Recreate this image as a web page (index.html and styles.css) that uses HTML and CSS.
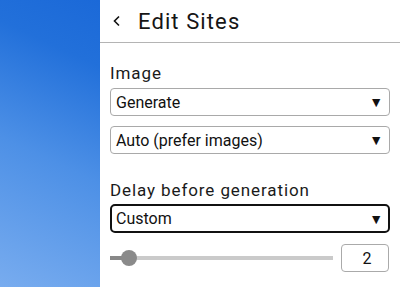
FILE: index.html
```html
<!DOCTYPE html>
<html>
<head>
<meta charset="utf-8">
<link rel="stylesheet" href="styles.css">
</head>
<body>
<div class="app">
  <div class="backdrop"></div>
  <div class="panel">
    <div class="header">
      <svg class="back" width="10" height="14" viewBox="0 0 10 14"><polyline points="7,2.5 2.5,7 7,11.5" fill="none" stroke="#111" stroke-width="1.6"/></svg>
      <span class="title">Edit Sites</span>
    </div>
    <div class="content">
      <div class="label label-first">Image</div>
      <div class="select"><span>Generate</span><span class="arrow">▼</span></div>
      <div class="select"><span>Auto (prefer images)</span><span class="arrow">▼</span></div>
      <div class="label label-second">Delay before generation</div>
      <div class="select focused"><span>Custom</span><span class="arrow">▼</span></div>
      <div class="slider-row">
        <div class="slider">
          <div class="track-fill"></div>
          <div class="thumb"></div>
        </div>
        <div class="number">2</div>
      </div>
    </div>
  </div>
</div>
</body>
</html>
```
FILE: styles.css
```css
html, body {
  margin: 0;
  padding: 0;
  width: 400px;
  height: 287px;
  overflow: hidden;
  font-family: Roboto, "Liberation Sans", sans-serif;
  color: #111;
}
.app {
  display: flex;
  width: 400px;
  height: 287px;
}
.backdrop {
  width: 100px;
  flex: none;
  background: linear-gradient(25deg, #78acef 0%, #4d90e6 45%, #2270da 80%, #1b69d8 100%);
}
.panel {
  flex: 1;
  background: #fff;
  display: flex;
  flex-direction: column;
}
.header {
  border-bottom: 1px solid #b4b4b4;
  display: flex;
  align-items: center;
  padding-left: 12px;
  box-sizing: border-box;
  height: 43px;
}
.back {
  margin-right: 16px;
  margin-top: -1px;
}
.title {
  font-size: 22px;
  letter-spacing: 1.1px;
  color: #151515;
}
.content {
  padding: 0 10px;
  display: flex;
  flex-direction: column;
}
.label {
  font-size: 17px;
  letter-spacing: 0.9px;
  line-height: 20px;
  color: #1a1a1a;
}
.label-first {
  margin-top: 20px;
  margin-bottom: 5px;
}
.label-second {
  margin-top: 16px;
  margin-bottom: 4px;
}
.select {
  height: 28px;
  box-sizing: border-box;
  border: 1px solid #a9a9a9;
  border-radius: 4px;
  display: flex;
  align-items: center;
  justify-content: space-between;
  padding: 0 5px 0 5px;
  font-size: 16px;
  color: #111;
  margin-bottom: 10px;
}
.select.focused {
  border: 2px solid #111;
  border-radius: 5px;
  padding: 0 4px 0 4px;
  height: 29px;
}
.arrow {
  font-size: 14px;
  margin-right: 1px;
}
.slider-row {
  display: flex;
  align-items: center;
  height: 28px;
  margin-top: 1px;
}
.slider {
  position: relative;
  width: 223px;
  height: 4px;
  background: #cacaca;
  margin-right: 8px;
}
.track-fill {
  width: 19px;
  height: 4px;
  background: #888;
}
.thumb {
  position: absolute;
  left: 11px;
  top: -6px;
  width: 16px;
  height: 16px;
  border-radius: 50%;
  background: #8a8a8a;
}
.number {
  width: 48px;
  height: 28px;
  box-sizing: border-box;
  border: 1px solid #aaa;
  border-radius: 4px;
  font-size: 16px;
  display: flex;
  align-items: center;
  justify-content: center;
  padding-left: 4px;
}
```
